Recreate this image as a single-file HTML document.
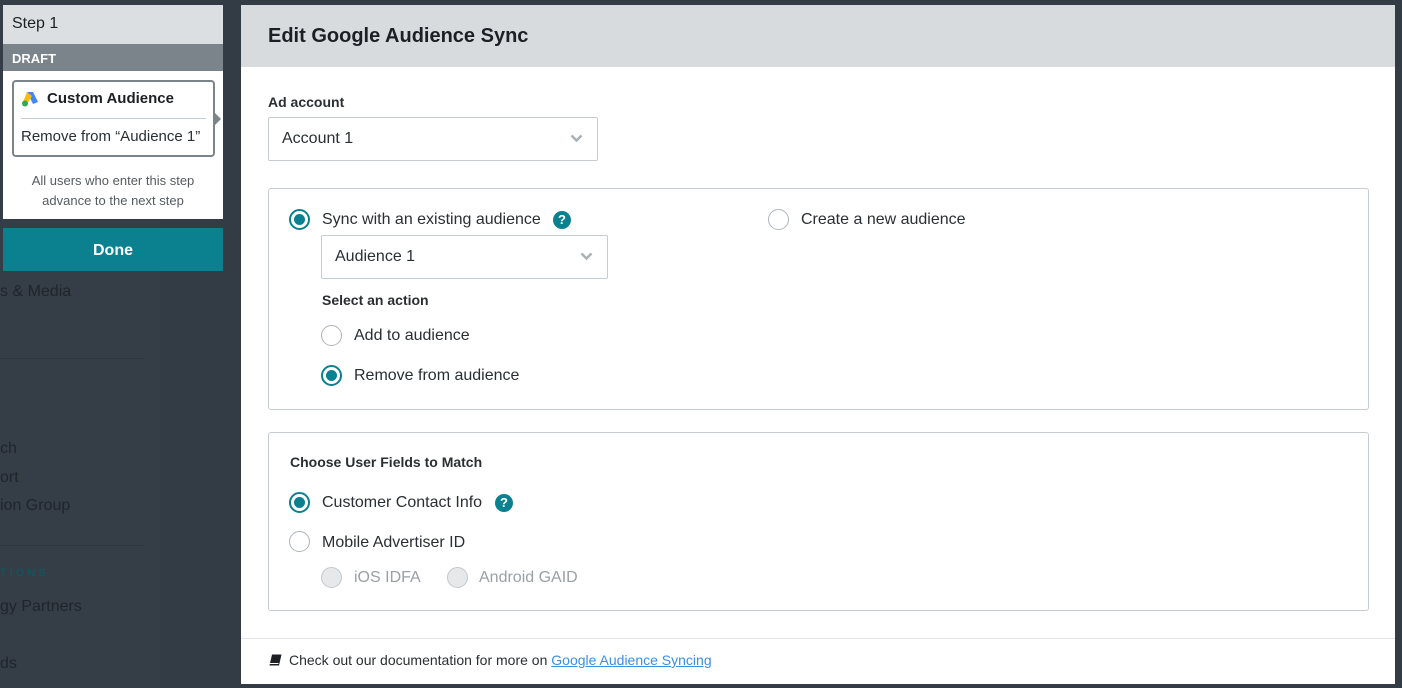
<!DOCTYPE html>
<html><head><meta charset="utf-8"><style>
*{box-sizing:border-box;margin:0;padding:0}
body{width:1402px;height:688px;overflow:hidden;background:#333b44;font-family:"Liberation Sans",sans-serif;color:#2a2f33;position:relative}
.a{position:absolute}
.side{left:0;top:0;width:160px;height:688px;background:#353d46}
.nav{color:#1f252b;font-size:16px;left:0}
.sep{height:1px;background:#2f363e;left:0;width:145px}
.modal{left:241px;top:5px;width:1154px;height:679px;background:#fff}
.hdr{left:0;top:0;width:1154px;height:62px;background:#d8dbde;font-weight:bold;font-size:20px;padding:20px 0 0 27px;color:#1c2024}
.lbl{font-weight:bold;font-size:14px;color:#2a2f33}
.sel{border:1px solid #c7ccd0;border-radius:2px;background:#fff;font-size:16px;padding:0 13px;display:flex;align-items:center}
.chev{position:absolute;right:14px;top:50%;margin-top:-5px}
.box{border:1px solid #c7ccd0;border-radius:3px}
.rad{width:21px;height:21px;border-radius:50%;border:1px solid #aeb4b9;background:#fff}
.rad.on{border:2px solid #0b8190}
.rad.on::after{content:"";position:absolute;left:3px;top:3px;width:11px;height:11px;border-radius:50%;background:#0b8190}
.rad.dis{background:#e6e8ea;border-color:#c4c8cc}
.t{font-size:16px;color:#2a2f33}
.q{width:18px;height:18px;border-radius:50%;background:#0b8190;color:#fff;font-size:13px;font-weight:bold;text-align:center;line-height:18px}
</style></head><body>
<div class="a side"></div>
<div class="a nav" style="top:283px">s &amp; Media</div>
<div class="a sep" style="top:358px"></div>
<div class="a nav" style="top:440px">ch</div>
<div class="a nav" style="top:469px">ort</div>
<div class="a nav" style="top:497px">ion Group</div>
<div class="a sep" style="top:545px"></div>
<div class="a" style="top:567px;left:0;font-size:11px;font-weight:bold;letter-spacing:3px;color:#14545c">TIONS</div>
<div class="a nav" style="top:598px">gy Partners</div>
<div class="a nav" style="top:655px">ds</div>

<div class="a" style="left:3px;top:5px;width:220px;height:214px;background:#fff"></div>
<div class="a" style="left:3px;top:5px;width:220px;height:39px;background:#dcdfe1;font-size:16px;padding:10px 0 0 9px;color:#1c2024">Step 1</div>
<div class="a" style="left:3px;top:44px;width:220px;height:27px;background:#7a848a;color:#fff;font-weight:bold;font-size:13px;padding:7px 0 0 9px">DRAFT</div>
<div class="a" style="left:12px;top:80px;width:203px;height:77px;border:2px solid #7a848a;border-radius:4px;background:#fff"></div>
<div class="a" style="left:215px;top:113px;width:0;height:0;border-top:6px solid transparent;border-bottom:6px solid transparent;border-left:6px solid #7a848a"></div>
<svg class="a" style="left:21px;top:91px" width="18" height="16" viewBox="0 0 18 16"><path d="M6 1 L12 1 L17 11 L12 13Z" fill="#4285f4"/><path d="M6 1 L11 5 L6 13 L2 11Z" fill="#fbbc04"/><circle cx="4" cy="12.5" r="3" fill="#34a853"/></svg>
<div class="a" style="left:47px;top:90px;font-weight:bold;font-size:15px;color:#1c2024">Custom Audience</div>
<div class="a" style="left:21px;top:118px;width:185px;height:1px;background:#c7ccd0"></div>
<div class="a" style="left:21px;top:128px;font-size:15px;color:#2a2f33">Remove from “Audience 1”</div>
<div class="a" style="left:3px;top:171px;width:220px;text-align:center;font-size:13px;line-height:20px;color:#555b60">All users who enter this step<br>advance to the next step</div>
<div class="a" style="left:3px;top:228px;width:220px;height:43px;background:#0b8190;color:#fff;font-weight:bold;font-size:16px;text-align:center;line-height:45px">Done</div>

<div class="a modal">
<div class="a hdr">Edit Google Audience Sync</div>
<div class="a lbl" style="left:27px;top:89px">Ad account</div>
<div class="a sel" style="left:27px;top:112px;width:330px;height:44px">Account 1<svg class="chev" width="13" height="9" viewBox="0 0 13 9"><path d="M1.5 1.5 L6.5 6.5 L11.5 1.5" stroke="#aab0b5" stroke-width="2.5" fill="none"/></svg></div>

<div class="a box" style="left:27px;top:183px;width:1101px;height:222px"></div>
<div class="a rad on" style="left:48px;top:204px"></div>
<div class="a t" style="left:81px;top:206px">Sync with an existing audience</div>
<div class="a q" style="left:312px;top:206px">?</div>
<div class="a rad" style="left:527px;top:204px"></div>
<div class="a t" style="left:560px;top:206px">Create a new audience</div>
<div class="a sel" style="left:80px;top:230px;width:287px;height:44px">Audience 1<svg class="chev" width="13" height="9" viewBox="0 0 13 9"><path d="M1.5 1.5 L6.5 6.5 L11.5 1.5" stroke="#aab0b5" stroke-width="2.5" fill="none"/></svg></div>
<div class="a lbl" style="left:81px;top:287px">Select an action</div>
<div class="a rad" style="left:80px;top:320px"></div>
<div class="a t" style="left:113px;top:322px">Add to audience</div>
<div class="a rad on" style="left:80px;top:360px"></div>
<div class="a t" style="left:113px;top:362px">Remove from audience</div>

<div class="a box" style="left:27px;top:427px;width:1101px;height:179px"></div>
<div class="a lbl" style="left:49px;top:449px">Choose User Fields to Match</div>
<div class="a rad on" style="left:48px;top:487px"></div>
<div class="a t" style="left:81px;top:489px">Customer Contact Info</div>
<div class="a q" style="left:254px;top:489px">?</div>
<div class="a rad" style="left:48px;top:526px"></div>
<div class="a t" style="left:81px;top:529px">Mobile Advertiser ID</div>
<div class="a rad dis" style="left:80px;top:562px"></div>
<div class="a t" style="left:113px;top:564px;color:#9aa0a5">iOS IDFA</div>
<div class="a rad dis" style="left:206px;top:562px"></div>
<div class="a t" style="left:238px;top:564px;color:#9aa0a5">Android GAID</div>

<div class="a" style="left:0;top:633px;width:1154px;height:1px;background:#e3e6e8"></div>
<svg class="a" style="left:28px;top:649px" width="13" height="12" viewBox="0 0 13 12"><path d="M3 0.5 H12.5 L10 11.5 H0.5Z" fill="#1c2024"/><path d="M1 9.5 H9.5" stroke="#fff" stroke-width="1"/></svg>
<div class="a" style="left:48px;top:647px;font-size:14px;color:#2a2f33">Check out our documentation for more on <span style="color:#3b8fe0;text-decoration:underline">Google Audience Syncing</span></div>
</div>
</body></html>
